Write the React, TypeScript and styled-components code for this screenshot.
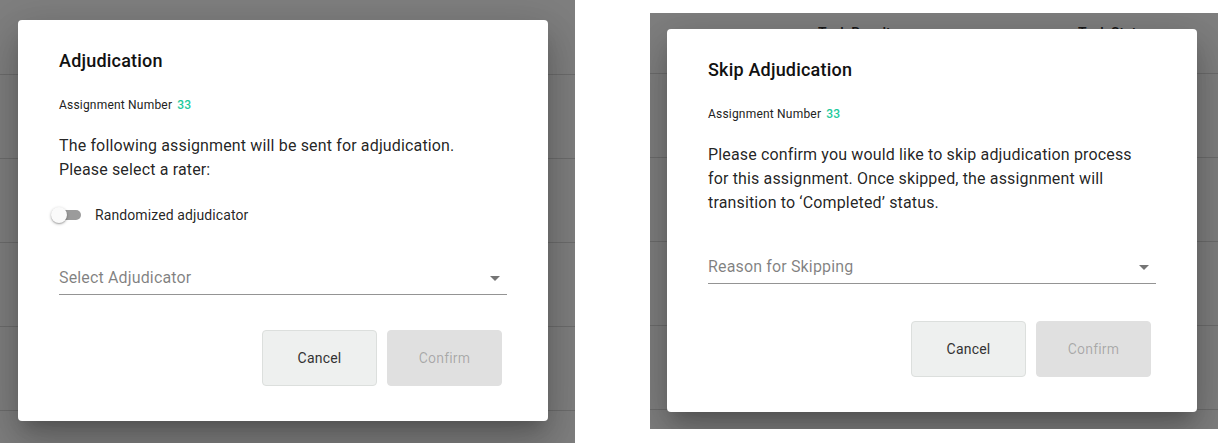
import React from "react";
import styled, { createGlobalStyle } from "styled-components";

const GlobalStyle = createGlobalStyle`
  html, body {
    margin: 0;
    padding: 0;
    background: #fff;
  }
  body {
    font-family: Roboto, "Noto Sans", Arial, sans-serif;
    -webkit-font-smoothing: antialiased;
  }
`;

const Page = styled.div`
  display: flex;
  align-items: flex-start;
  width: 1218px;
  height: 443px;
  overflow: hidden;
`;

const Panel = styled.div<{ $width: number; $height: number; $top: number; $left: number }>`
  position: relative;
  flex: none;
  width: ${(p) => p.$width}px;
  height: ${(p) => p.$height}px;
  margin-top: ${(p) => p.$top}px;
  margin-left: ${(p) => p.$left}px;
  background: #fff;
  overflow: hidden;
`;

/* the page that sits under the modal scrim */
const BgTable = styled.div`
  display: flex;
  flex-direction: column;
`;

const BgHeader = styled.div<{ $height: number }>`
  display: flex;
  height: ${(p) => p.$height}px;
  box-sizing: border-box;
  padding-top: 10px;
  border-bottom: 1px solid #dadada;
`;

const BgHeadCell = styled.div<{ $left: number }>`
  margin-left: ${(p) => p.$left}px;
  font-size: 14px;
  line-height: 20px;
  font-weight: 500;
  color: #333;
`;

const BgRow = styled.div`
  height: 84px;
  box-sizing: border-box;
  border-bottom: 1px solid #dadada;
`;

const Scrim = styled.div<{ $pt: number; $pl: number }>`
  position: absolute;
  inset: 0;
  display: flex;
  align-items: flex-start;
  padding: ${(p) => p.$pt}px 0 0 ${(p) => p.$pl}px;
  background: rgba(0, 0, 0, 0.5);
`;

const Dialog = styled.div`
  width: 530px;
  box-sizing: border-box;
  padding: 29px 41px 35px;
  background: #fff;
  border-radius: 4px;
  box-shadow: 0px 11px 15px -7px rgba(0, 0, 0, 0.2),
    0px 24px 38px 3px rgba(0, 0, 0, 0.14), 0px 9px 46px 8px rgba(0, 0, 0, 0.12);
`;

const Title = styled.h2`
  margin: 0;
  font-size: 18px;
  line-height: 24px;
  font-weight: 500;
  letter-spacing: 0.2px;
  color: #111;
`;

const Meta = styled.div`
  margin-top: 24px;
  font-size: 12px;
  line-height: 16px;
  letter-spacing: 0.2px;
  color: #222;
`;

const MetaValue = styled.span`
  margin-left: 5px;
  font-weight: 500;
  color: #1cc99b;
`;

const Body = styled.p`
  max-width: 440px;
  margin: 21px 0 0;
  font-size: 16px;
  line-height: 24px;
  letter-spacing: 0.15px;
  color: rgba(0, 0, 0, 0.87);
`;

const ToggleRow = styled.label`
  display: flex;
  align-items: center;
  height: 24px;
  margin-top: 21px;
`;

const Switch = styled.span`
  position: relative;
  display: block;
  width: 30px;
  height: 16px;
  margin-left: -8px;

  &::before {
    content: "";
    position: absolute;
    left: 10px;
    top: 3px;
    width: 20px;
    height: 10px;
    border-radius: 5px;
    background: #9b9b9b;
  }

  &::after {
    content: "";
    position: absolute;
    left: 0;
    top: 0;
    width: 16px;
    height: 16px;
    border-radius: 50%;
    background: #fafafa;
    box-shadow: 0 1px 3px rgba(0, 0, 0, 0.3), 0 1px 1px rgba(0, 0, 0, 0.14);
  }
`;

const ToggleLabel = styled.span`
  margin-left: 14px;
  font-size: 14px;
  line-height: 20px;
  letter-spacing: 0.1px;
  color: rgba(0, 0, 0, 0.87);
`;

const SelectField = styled.div<{ $mt: number }>`
  display: flex;
  align-items: center;
  justify-content: space-between;
  margin-top: ${(p) => p.$mt}px;
  padding-bottom: 4px;
  border-bottom: 1px solid rgba(0, 0, 0, 0.42);
`;

const Placeholder = styled.span`
  font-size: 16px;
  line-height: 24px;
  letter-spacing: 0.15px;
  color: rgba(0, 0, 0, 0.5);
`;

const Actions = styled.div<{ $mt: number }>`
  display: flex;
  justify-content: flex-end;
  gap: 10px;
  margin-top: ${(p) => p.$mt}px;
  padding-right: 5px;
`;

const Button = styled.button<{ $disabled?: boolean }>`
  width: 115px;
  height: 56px;
  border-radius: 4px;
  font-family: inherit;
  font-size: 14px;
  letter-spacing: 0.2px;
  border: 1px solid ${(p) => (p.$disabled ? "#e0e0e0" : "#dcdfdd")};
  background: ${(p) => (p.$disabled ? "#e0e0e0" : "#eef0ef")};
  color: ${(p) => (p.$disabled ? "rgba(0, 0, 0, 0.26)" : "#333")};
  cursor: ${(p) => (p.$disabled ? "default" : "pointer")};
`;

const ArrowDown = () => (
  <svg width="24" height="24" viewBox="0 0 24 24" aria-hidden="true">
    <path d="M7 10l5 5 5-5z" fill="rgba(0,0,0,0.54)" />
  </svg>
);

const rows = [0, 1, 2, 3, 4];

export default function App() {
  return (
    <>
      <GlobalStyle />
      <Page>
        <Panel $width={575} $height={443} $top={0} $left={0}>
          <BgTable>
            <BgHeader $height={75} />
            {rows.map((r) => (
              <BgRow key={r} />
            ))}
          </BgTable>
          <Scrim $pt={20} $pl={18}>
            <Dialog>
              <Title>Adjudication</Title>
              <Meta>
                Assignment Number<MetaValue>33</MetaValue>
              </Meta>
              <Body>
                The following assignment will be sent for adjudication.
                <br />
                Please select a rater:
              </Body>
              <ToggleRow>
                <Switch />
                <ToggleLabel>Randomized adjudicator</ToggleLabel>
              </ToggleRow>
              <SelectField $mt={39}>
                <Placeholder>Select Adjudicator</Placeholder>
                <ArrowDown />
              </SelectField>
              <Actions $mt={35}>
                <Button>Cancel</Button>
                <Button $disabled>Confirm</Button>
              </Actions>
            </Dialog>
          </Scrim>
        </Panel>

        <Panel $width={568} $height={416} $top={13} $left={75}>
          <BgTable>
            <BgHeader $height={61}>
              <BgHeadCell $left={168}>Task Results</BgHeadCell>
              <BgHeadCell $left={180}>Task Status</BgHeadCell>
            </BgHeader>
            {rows.map((r) => (
              <BgRow key={r} />
            ))}
          </BgTable>
          <Scrim $pt={16} $pl={17}>
            <Dialog>
              <Title>Skip Adjudication</Title>
              <Meta>
                Assignment Number<MetaValue>33</MetaValue>
              </Meta>
              <Body>
                Please confirm you would like to skip adjudication process
                for this assignment. Once skipped, the assignment will
                transition to ‘Completed’ status.
              </Body>
              <SelectField $mt={40}>
                <Placeholder>Reason for Skipping</Placeholder>
                <ArrowDown />
              </SelectField>
              <Actions $mt={37}>
                <Button>Cancel</Button>
                <Button $disabled>Confirm</Button>
              </Actions>
            </Dialog>
          </Scrim>
        </Panel>
      </Page>
    </>
  );
}
